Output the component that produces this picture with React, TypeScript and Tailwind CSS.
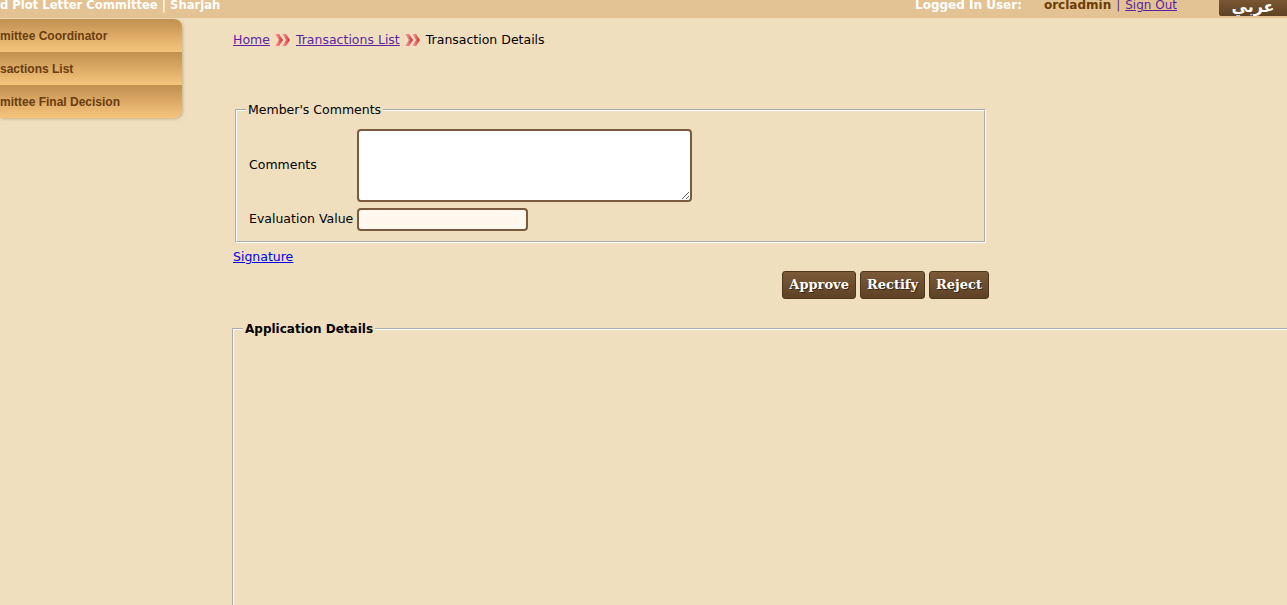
import React from 'react';

const Chevrons = () => (
  <svg width="16" height="12" viewBox="0 0 16 12" className="shrink-0">
    <defs>
      <linearGradient id="chev" x1="0" x2="1" y1="0" y2="0">
        <stop offset="0" stopColor="#f7b0b0" />
        <stop offset="1" stopColor="#cf2a2a" />
      </linearGradient>
    </defs>
    <polygon points="0,0 4,0 8,6 4,12 0,12 4,6" fill="url(#chev)" />
    <polygon points="7,0 11,0 15,6 11,12 7,12 11,6" fill="url(#chev)" />
  </svg>
);

const menuItems = ['mittee Coordinator', 'sactions List', 'mittee Final Decision'];

const actions = ['Approve', 'Rectify', 'Reject'];

const App = () => {
  return (
    <div className="w-[1287px] h-[605px] overflow-hidden bg-[#f0dfbe] font-['DejaVu_Sans',sans-serif] text-[12.5px] text-black">
      {/* top bar, page is scrolled so only the lower part shows */}
      <div className="h-[18px] bg-[#e3c393] flex overflow-hidden">
        <div className="-mt-[3px] leading-[16px] text-[11.6px] font-bold text-white whitespace-nowrap">
          d Plot Letter Committee | Sharjah
        </div>
        <div className="ml-auto flex -mt-[3px] leading-[16px] text-[12px] font-bold whitespace-nowrap">
          <span className="text-white">Logged In User:</span>
          <span className="ml-[22px] text-[#6b3c05]">orcladmin</span>
          <span className="mx-[5px] font-normal text-[#5b2a9a]">|</span>
          <a href="#" className="font-normal text-[#5b1fa0] underline">Sign Out</a>
        </div>
        <div className="ml-[42px] w-[68px] h-[16px] rounded-bl-[2px] bg-gradient-to-b from-[#7a5733] to-[#5e4124] flex items-end justify-center overflow-hidden">
          <span className="text-white text-[16px] leading-[18px] font-bold" dir="rtl">عربي</span>
        </div>
      </div>

      <div className="flex">
        <aside className="mt-[1px] w-[182px] shrink-0 self-start rounded-r-[8px] overflow-hidden shadow-[1px_1px_3px_rgba(120,90,40,0.35)]">
          {menuItems.map(item => (
            <div
              key={item}
              className="h-[33px] flex items-center bg-gradient-to-b from-[#c2904f] to-[#f6c57c] text-[#6a3c10] text-[12px] font-bold whitespace-nowrap font-['Liberation_Sans',sans-serif]"
            >
              {item}
            </div>
          ))}
        </aside>

        <main className="ml-[51px] pt-[14px] flex-1 min-w-0">
          <nav className="flex items-center leading-[16px]">
            <a href="#" className="text-[#5b1fa0] underline">Home</a>
            <span className="mx-[5px]"><Chevrons /></span>
            <a href="#" className="text-[#5b1fa0] underline">Transactions List</a>
            <span className="mx-[5px]"><Chevrons /></span>
            <span>Transaction Details</span>
          </nav>

          <fieldset className="mt-[54px] ml-[2px] w-[751px] border-2 [border-style:groove] border-white px-[12px] pb-[10px]">
            <legend className="px-[2px] -ml-[3px] leading-[16px]">Member's Comments</legend>
            <div className="mt-[11px] flex items-center">
              <label className="w-[108px] shrink-0">Comments</label>
              <textarea className="w-[335px] h-[73px] bg-white border-2 border-[#7a5a3e] rounded-[4px]" />
            </div>
            <div className="mt-[6px] flex items-center">
              <label className="w-[108px] shrink-0">Evaluation Value</label>
              <input type="text" className="w-[171px] h-[23px] bg-[#fff8ee] border-2 border-[#7a5a3e] rounded-[4px]" />
            </div>
          </fieldset>

          <div className="mt-[6px] leading-[16px]">
            <a href="#" className="text-[#0000ee] underline">Signature</a>
          </div>

          <div className="mt-[6px] w-[756px] flex justify-end gap-[4px]">
            {actions.map(a => (
              <button
                key={a}
                className="h-[28px] px-[6px] rounded-[3px] border border-[#4d351e] bg-gradient-to-b from-[#7b5a39] to-[#5e4226] text-white font-bold text-[13px] font-['DejaVu_Serif',serif] [text-shadow:1px_1px_0_#3a2410]"
              >
                {a}
              </button>
            ))}
          </div>

          <fieldset className="mt-[22px] -ml-[1px] w-[1100px] h-[400px] border-2 [border-style:groove] border-white pl-[9px]">
            <legend className="px-[2px] leading-[16px] font-bold text-[12px]">Application Details</legend>
          </fieldset>
        </main>
      </div>
    </div>
  );
};

export default App;
